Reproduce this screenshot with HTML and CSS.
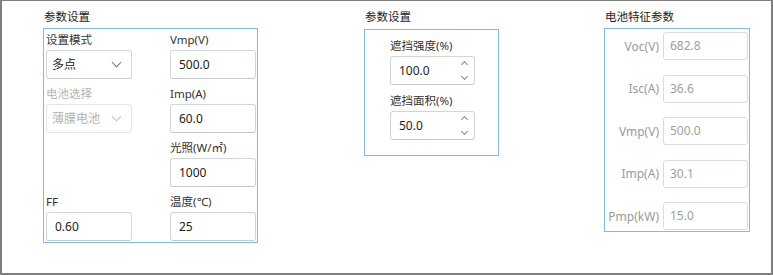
FILE: index.html
```html
<!DOCTYPE html>
<html lang="zh">

<head>
    <meta charset="UTF-8" />
    <title>参数设置</title>
    <link rel="stylesheet" href="styles.css">
</head>

<body>
    <div class="frame">
        <!-- 参数设置：模式 -->
        <div class="group group-mode">
            <div class="group-title">参数设置</div>
            <div class="group-box">
                <div class="field">
                    <label>设置模式</label>
                    <div class="select">多点<span class="chevron"></span></div>
                </div>
                <div class="field">
                    <label>Vmp(V)</label>
                    <div class="input">500.0</div>
                </div>
                <div class="field disabled">
                    <label>电池选择</label>
                    <div class="select">薄膜电池<span class="chevron"></span></div>
                </div>
                <div class="field">
                    <label>Imp(A)</label>
                    <div class="input">60.0</div>
                </div>
                <div class="field"></div>
                <div class="field">
                    <label>光照(W/㎡)</label>
                    <div class="input">1000</div>
                </div>
                <div class="field">
                    <label>FF</label>
                    <div class="input">0.60</div>
                </div>
                <div class="field">
                    <label>温度(℃)</label>
                    <div class="input">25</div>
                </div>
            </div>
        </div>

        <!-- 参数设置：遮挡 -->
        <div class="group group-shade">
            <div class="group-title">参数设置</div>
            <div class="group-box">
                <div class="field">
                    <label>遮挡强度(%)</label>
                    <div class="input spin">100.0<span class="spin-btns"><span class="caret up"></span><span class="caret down"></span></span></div>
                </div>
                <div class="field">
                    <label>遮挡面积(%)</label>
                    <div class="input spin">50.0<span class="spin-btns"><span class="caret up"></span><span class="caret down"></span></span></div>
                </div>
            </div>
        </div>

        <!-- 电池特征参数 -->
        <div class="group group-cell">
            <div class="group-title">电池特征参数</div>
            <div class="group-box">
                <span class="row-label">Voc(V)</span><div class="input">682.8</div>
                <span class="row-label">Isc(A)</span><div class="input">36.6</div>
                <span class="row-label">Vmp(V)</span><div class="input">500.0</div>
                <span class="row-label">Imp(A)</span><div class="input">30.1</div>
                <span class="row-label">Pmp(kW)</span><div class="input">15.0</div>
            </div>
        </div>
    </div>
</body>

</html>
```

FILE: styles.css
```css
* {
    box-sizing: border-box;
}

body {
    margin: 0;
    font-family: "Noto Sans", "Noto Sans CJK SC", sans-serif;
    font-size: 11.5px;
    color: #333;
    background: #fff;
}

.frame {
    width: 773px;
    height: 275px;
    border-style: solid;
    border-color: #7f7f7f;
    border-width: 1px 2px 2px 2px;
    display: flex;
    align-items: flex-start;
    padding-top: 6px;
}

.group-title {
    height: 20px;
    line-height: 20px;
    padding-left: 1px;
    color: #222;
    margin-bottom: 1px;
}

.group-box {
    border: 1px solid #7fb9f0;
}

/* 左侧：模式参数 */
.group-mode {
    margin-left: 41px;
    width: 215px;
}

.group-mode .group-box {
    display: grid;
    grid-template-columns: 86px 86px;
    column-gap: 38px;
    row-gap: 5px;
    padding: 1px 1px 1px 2px;
}

.field label {
    display: block;
    height: 20px;
    line-height: 20px;
    color: #333;
}

.field.disabled label {
    color: #b4b4b4;
}

.input,
.select {
    position: relative;
    height: 29px;
    line-height: 27px;
    padding-left: 8px;
    border: 1px solid #d2d6db;
    border-bottom-color: #c3c8ce;
    border-radius: 3px;
    background: #fff;
    color: #222;
    font-size: 12px;
}

.select {
    padding-left: 5px;
}

.field.disabled .select {
    color: #b4b4b4;
    border-color: #e3e5e8;
}

.chevron {
    position: absolute;
    right: 11px;
    top: 8px;
    width: 7px;
    height: 7px;
    border-right: 1px solid #777;
    border-bottom: 1px solid #777;
    transform: rotate(45deg);
}

.field.disabled .chevron {
    border-color: #c4c4c4;
}

/* 中间：遮挡参数 */
.group-shade {
    margin-left: 106px;
    width: 135px;
}

.group-shade .group-title {
    margin-bottom: 2px;
}

.group-shade .group-box {
    display: flex;
    flex-direction: column;
    gap: 6px;
    padding: 6px 0 15px 25px;
}

.group-shade .input {
    width: 85px;
}

.spin-btns {
    position: absolute;
    right: 7px;
    top: 5px;
    display: flex;
    flex-direction: column;
    gap: 7px;
}

.caret {
    display: block;
    width: 5px;
    height: 5px;
    border-left: 1px solid #888;
    border-top: 1px solid #888;
}

.caret.up {
    transform: rotate(45deg);
}

.caret.down {
    transform: rotate(225deg);
}

/* 右侧：电池特征参数 */
.group-cell {
    margin-left: 105px;
    width: 146px;
}

.group-cell .group-box {
    display: grid;
    grid-template-columns: 53px 85px;
    column-gap: 4px;
    row-gap: 14.5px;
    align-items: center;
    padding: 3px 1px 1px 1px;
}

.row-label {
    text-align: right;
    color: #9a9a9a;
    font-size: 12px;
}

.group-cell .input {
    height: 28px;
    line-height: 26px;
    padding-left: 6px;
    color: #a0a0a0;
    border-color: #d8dbdf;
}
```
